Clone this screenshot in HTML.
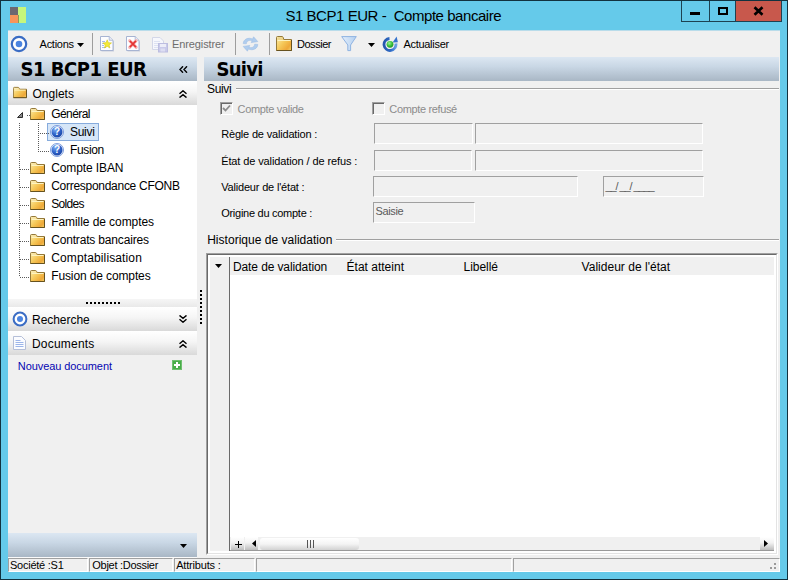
<!DOCTYPE html>
<html><head><meta charset="utf-8"><title>S1 BCP1 EUR - Compte bancaire</title>
<style>
html,body{margin:0;padding:0;}
body{width:788px;height:580px;overflow:hidden;position:relative;background:#65caea;font-family:"Liberation Sans",sans-serif;font-size:12px;color:#000;}
div,span,svg{position:absolute;box-sizing:border-box;}
.t{white-space:pre;}
.hdr{height:24px;top:57px;background:linear-gradient(#dce7f2 0%,#c9d7e5 40%,#a9b7c5 100%);}
.bar{left:8px;width:189px;height:24px;background:linear-gradient(#ffffff 0%,#f5f5f5 45%,#d9d9d9 100%);}
.inp{height:21px;background:#f0f0f0;border:1px solid #fff;border-top-color:#a0a0a0;border-left-color:#a0a0a0;}
.cb{width:13px;height:13px;background:#f0f0f0;border:1px solid #fff;border-top-color:#a0a0a0;border-left-color:#a0a0a0;box-shadow:inset 1px 1px 0 #696969;}
.sep{width:1px;top:33px;height:22px;background:#9d9d9d;}
.sp{height:14px;top:558px;background:#f0f0f0;border:1px solid #fff;border-top-color:#a0a0a0;border-left-color:#a0a0a0;}
.dv{width:1px;background-image:linear-gradient(#5a5a5a 50%,transparent 50%);background-size:1px 2px;}
.dh{height:1px;background-image:linear-gradient(90deg,#5a5a5a 50%,transparent 50%);background-size:2px 1px;}

</style></head><body>
<!-- window frame -->
<div style="left:0;top:0;width:788px;height:580px;background:#65caea;border:1px solid #12323f;"></div>
<!-- app icon -->
<div style="left:10px;top:7px;width:8px;height:8px;background:#6d6870;"></div>
<div style="left:10px;top:15px;width:8px;height:8px;background:#f8955a;"></div>
<div style="left:18px;top:7px;width:8px;height:16px;background:#c6f67c;"></div>
<div style="left:18px;top:15px;width:1px;height:8px;background:#8a9a5a;"></div>
<!-- caption buttons -->
<div style="left:681px;top:1px;width:101px;height:21px;border-left:1px solid #1d4252;border-bottom:1px solid #1d4252;border-right:1px solid #1d4252;"></div>
<div style="left:709px;top:1px;width:1px;height:20px;background:#1d4252;"></div>
<div style="left:735px;top:1px;width:46px;height:20px;background:#c8584c;border-left:1px solid #1d4252;"></div>
<div style="left:690px;top:12px;width:10px;height:3px;background:#000;"></div>
<div style="left:718px;top:7px;width:10px;height:8px;border:2px solid #000;border-top-width:2px;"></div>
<svg style="left:753px;top:6px" width="12" height="10" viewBox="0 0 12 10"><path d="M1.5 1.2 L9.5 8.8 M9.5 1.2 L1.5 8.8" stroke="#000" stroke-width="2.6" fill="none"/></svg>
<!-- client -->
<div style="left:8px;top:30px;width:772px;height:1px;background:#b9dcea;"></div>
<div style="left:8px;top:31px;width:772px;height:541px;background:#f0f0f0;"></div>
<!-- toolbar -->
<svg style="left:10px;top:35px" width="18" height="18" viewBox="0 0 18 18"><circle cx="9" cy="9" r="7.2" fill="#fff" stroke="#3a6cc4" stroke-width="2.2"/><circle cx="9" cy="9" r="3.3" fill="#4b84e0"/></svg>
<svg style="left:77px;top:43px" width="7" height="4" viewBox="0 0 7 4"><path d="M0 0H7L3.5 4Z" fill="#000"/></svg>
<div class="sep" style="left:92px"></div>
<div class="sep" style="left:235px"></div>
<div class="sep" style="left:269px"></div>
<!-- new doc icon -->
<svg style="left:100px;top:36px" width="15" height="16" viewBox="0 0 15 16"><path d="M1.5 1.5H10L14 5.5V15.5H1.5Z" fill="#c9cedb"/><path d="M0.5 0.5H9.2L13 4.3V14.5H0.5Z" fill="#fdfdff" stroke="#a7b4d2"/><path d="M9.2 0.5V4.3H13" fill="#e4e9f5" stroke="#a7b4d2" stroke-width="0.8"/><path d="M2 5.5H5M2 7.5H4M2 9.5H4M2 11.5H6" stroke="#a9bdea"/><path d="M7.2 3.8L8.4 6.7L11.5 6.9L9.1 8.9L9.9 12L7.2 10.3L4.5 12L5.3 8.9L2.9 6.9L6 6.7Z" fill="#f4ea35" stroke="#d4c422" stroke-width="0.6"/></svg>
<!-- delete doc icon -->
<svg style="left:126px;top:36px" width="15" height="16" viewBox="0 0 15 16"><path d="M1.5 1.5H10L14 5.5V15.5H1.5Z" fill="#c9cedb"/><path d="M0.5 0.5H9.2L13 4.3V14.5H0.5Z" fill="#fdfdff" stroke="#a7b4d2"/><path d="M9.2 0.5V4.3H13" fill="#e4e9f5" stroke="#a7b4d2" stroke-width="0.8"/><path d="M3.6 4.6L10.2 11.4M10.2 4.6L3.6 11.4" stroke="#f7b8b8" stroke-width="3" stroke-linecap="round"/><path d="M3.8 4.8L10 11.2M10 4.8L3.8 11.2" stroke="#e43535" stroke-width="1.7"/></svg>
<!-- save (disabled) icon -->
<svg style="left:152px;top:36px" width="17" height="17" viewBox="0 0 17 17"><path d="M0.5 1.5H8L11.5 5V13.5H0.5Z" fill="#f6f7fc" stroke="#d3d7e8"/><path d="M2 5.5H8M2 7.5H9M2 9.5H9M2 11.5H6" stroke="#dde2f2"/><rect x="6.5" y="7.5" width="9" height="8.5" fill="#c9caea" stroke="#bcbde0"/><rect x="8" y="8" width="6" height="3" fill="#ecedf8"/><rect x="8.5" y="12.5" width="4.5" height="3" fill="#dddef2"/></svg>
<!-- refresh arrows -->
<svg style="left:242px;top:36px" width="17" height="16" viewBox="0 0 17 16"><g fill="#b0cdee" stroke="#96b9e2" stroke-width="0.5"><path d="M1.2 7.6C1.4 3.2 6.2 1 10.6 3L11.6 0.8L15.8 5.6L9.2 6.6L10.1 4.7C7.2 3.6 4.6 5 4.3 7.8Z"/><path d="M15.8 8.4C15.6 12.8 10.8 15 6.4 13L5.4 15.2L1.2 10.4L7.8 9.4L6.9 11.3C9.8 12.4 12.4 11 12.7 8.2Z"/></g></svg>
<!-- folder icon (toolbar) -->
<svg style="left:276px;top:36px" width="16" height="15" viewBox="0 0 16 15"><defs><linearGradient id="fg" x1="0" y1="0" x2="1" y2="0.8"><stop offset="0" stop-color="#fcedaa"/><stop offset="0.5" stop-color="#f5c858"/><stop offset="0.85" stop-color="#eea838"/><stop offset="1" stop-color="#f0c25a"/></linearGradient></defs><path d="M0.5 14.5V1.5Q0.5 0.5 1.5 0.5H6Q6.8 0.5 7.2 1.4L7.8 3.5H15.5V14.5Z" fill="url(#fg)" stroke="#94793a"/><path d="M1.5 1.5H6.2L6.9 3.5H1.5Z" fill="#e9d594"/><path d="M1.5 4.5H14.5" stroke="#fdf3c0"/><path d="M0.5 14.5H15.5V4" stroke="#66521f" fill="none"/></svg>
<!-- funnel -->
<svg style="left:341px;top:36px" width="16" height="16" viewBox="0 0 16 16"><defs><linearGradient id="fu" x1="0" y1="0" x2="1" y2="0"><stop offset="0" stop-color="#e3eefb"/><stop offset="1" stop-color="#b4d0f0"/></linearGradient></defs><path d="M0.7 0.6H15.3L9.6 9V14.6H6.8V9Z" fill="url(#fu)" stroke="#8fb3e2" stroke-width="1"/></svg>
<svg style="left:368px;top:43px" width="7" height="4" viewBox="0 0 7 4"><path d="M0 0H7L3.5 4Z" fill="#000"/></svg>
<!-- actualiser icon -->
<svg style="left:382px;top:36px" width="16" height="16" viewBox="0 0 16 16"><defs><radialGradient id="gb" cx="0.4" cy="0.35" r="0.7"><stop offset="0" stop-color="#9af09a"/><stop offset="0.6" stop-color="#35bd35"/><stop offset="1" stop-color="#1f8f2a"/></radialGradient><linearGradient id="rb" x1="0" y1="0" x2="1" y2="0"><stop offset="0" stop-color="#2558ae"/><stop offset="0.6" stop-color="#2f6cc8"/><stop offset="1" stop-color="#6aa0e4"/></linearGradient></defs><path d="M7.5 2.5A6 6 0 1 0 13.9 7.4" fill="none" stroke="url(#rb)" stroke-width="2.8"/><path d="M10.6 6.6L15.9 6.2L14.6 0.6Z" fill="#3572cc"/><circle cx="8" cy="8.3" r="3.4" fill="url(#gb)"/></svg>
<!-- headers -->
<div class="hdr" style="left:8px;width:189px;"></div>
<div class="hdr" style="left:204px;width:575px;"></div>
<svg style="left:179px;top:66px" width="9" height="7" viewBox="0 0 9 7"><path d="M4 0.3L1 3.5L4 6.7M8 0.3L5 3.5L8 6.7" stroke="#000" stroke-width="1.4" fill="none"/></svg>
<!-- Onglets bar -->
<div class="bar" style="top:81px;"></div>
<svg style="left:179px;top:90px" width="8" height="8" viewBox="0 0 8 8"><path d="M0.5 3.8L4 0.8L7.5 3.8M0.5 7.6L4 4.6L7.5 7.6" stroke="#000" stroke-width="1.4" fill="none"/></svg>
<!-- tree -->
<div style="left:8px;top:105px;width:189px;height:194px;background:#fff;"></div>
<div style="left:47px;top:123px;width:52px;height:18px;background:#d6e6f8;border:1px solid #86abdc;"></div>
<svg style="left:17px;top:112px" width="6" height="6" viewBox="0 0 6 6"><path d="M5.5 0.5V5.5H0.5Z" fill="#8a8a8a" stroke="#2e2e2e" stroke-width="1"/></svg>
<div class="dh" style="left:27px;top:115px;width:3px;"></div>
<div class="dv" style="left:19px;top:123px;width:1px;height:154px;"></div>
<div class="dv" style="left:38px;top:123px;width:1px;height:29px;"></div>
<div class="dh" style="left:38px;top:133px;width:12px;"></div>
<div class="dh" style="left:38px;top:151px;width:12px;"></div>
<div class="dh" style="left:20px;top:169px;width:10px;"></div>
<div class="dh" style="left:20px;top:187px;width:10px;"></div>
<div class="dh" style="left:20px;top:205px;width:10px;"></div>
<div class="dh" style="left:20px;top:223px;width:10px;"></div>
<div class="dh" style="left:20px;top:241px;width:10px;"></div>
<div class="dh" style="left:20px;top:259px;width:10px;"></div>
<div class="dh" style="left:20px;top:277px;width:10px;"></div>
<svg style="left:30px;top:108px" width="15" height="12" viewBox="0 0 15 12"><path d="M0.5 11.5V1.5Q0.5 0.5 1.5 0.5H5.5Q6.2 0.5 6.6 1.4L7.2 2.5H14.5V11.5Z" fill="url(#fg)" stroke="#94793a"/><path d="M1.5 1.5H5.6L6.4 2.5H1.5Z" fill="#f6ebc4"/><path d="M1.5 3.5H13.5" stroke="#fdf3c0"/><path d="M0.5 11.5H14.5V3" stroke="#66521f" fill="none"/></svg>
<svg style="left:30px;top:162px" width="15" height="12" viewBox="0 0 15 12"><path d="M0.5 11.5V1.5Q0.5 0.5 1.5 0.5H5.5Q6.2 0.5 6.6 1.4L7.2 2.5H14.5V11.5Z" fill="url(#fg)" stroke="#94793a"/><path d="M1.5 1.5H5.6L6.4 2.5H1.5Z" fill="#f6ebc4"/><path d="M1.5 3.5H13.5" stroke="#fdf3c0"/><path d="M0.5 11.5H14.5V3" stroke="#66521f" fill="none"/></svg>
<svg style="left:30px;top:180px" width="15" height="12" viewBox="0 0 15 12"><path d="M0.5 11.5V1.5Q0.5 0.5 1.5 0.5H5.5Q6.2 0.5 6.6 1.4L7.2 2.5H14.5V11.5Z" fill="url(#fg)" stroke="#94793a"/><path d="M1.5 1.5H5.6L6.4 2.5H1.5Z" fill="#f6ebc4"/><path d="M1.5 3.5H13.5" stroke="#fdf3c0"/><path d="M0.5 11.5H14.5V3" stroke="#66521f" fill="none"/></svg>
<svg style="left:30px;top:198px" width="15" height="12" viewBox="0 0 15 12"><path d="M0.5 11.5V1.5Q0.5 0.5 1.5 0.5H5.5Q6.2 0.5 6.6 1.4L7.2 2.5H14.5V11.5Z" fill="url(#fg)" stroke="#94793a"/><path d="M1.5 1.5H5.6L6.4 2.5H1.5Z" fill="#f6ebc4"/><path d="M1.5 3.5H13.5" stroke="#fdf3c0"/><path d="M0.5 11.5H14.5V3" stroke="#66521f" fill="none"/></svg>
<svg style="left:30px;top:216px" width="15" height="12" viewBox="0 0 15 12"><path d="M0.5 11.5V1.5Q0.5 0.5 1.5 0.5H5.5Q6.2 0.5 6.6 1.4L7.2 2.5H14.5V11.5Z" fill="url(#fg)" stroke="#94793a"/><path d="M1.5 1.5H5.6L6.4 2.5H1.5Z" fill="#f6ebc4"/><path d="M1.5 3.5H13.5" stroke="#fdf3c0"/><path d="M0.5 11.5H14.5V3" stroke="#66521f" fill="none"/></svg>
<svg style="left:30px;top:234px" width="15" height="12" viewBox="0 0 15 12"><path d="M0.5 11.5V1.5Q0.5 0.5 1.5 0.5H5.5Q6.2 0.5 6.6 1.4L7.2 2.5H14.5V11.5Z" fill="url(#fg)" stroke="#94793a"/><path d="M1.5 1.5H5.6L6.4 2.5H1.5Z" fill="#f6ebc4"/><path d="M1.5 3.5H13.5" stroke="#fdf3c0"/><path d="M0.5 11.5H14.5V3" stroke="#66521f" fill="none"/></svg>
<svg style="left:30px;top:252px" width="15" height="12" viewBox="0 0 15 12"><path d="M0.5 11.5V1.5Q0.5 0.5 1.5 0.5H5.5Q6.2 0.5 6.6 1.4L7.2 2.5H14.5V11.5Z" fill="url(#fg)" stroke="#94793a"/><path d="M1.5 1.5H5.6L6.4 2.5H1.5Z" fill="#f6ebc4"/><path d="M1.5 3.5H13.5" stroke="#fdf3c0"/><path d="M0.5 11.5H14.5V3" stroke="#66521f" fill="none"/></svg>
<svg style="left:30px;top:270px" width="15" height="12" viewBox="0 0 15 12"><path d="M0.5 11.5V1.5Q0.5 0.5 1.5 0.5H5.5Q6.2 0.5 6.6 1.4L7.2 2.5H14.5V11.5Z" fill="url(#fg)" stroke="#94793a"/><path d="M1.5 1.5H5.6L6.4 2.5H1.5Z" fill="#f6ebc4"/><path d="M1.5 3.5H13.5" stroke="#fdf3c0"/><path d="M0.5 11.5H14.5V3" stroke="#66521f" fill="none"/></svg>
<svg style="left:13px;top:86px" width="14" height="13" viewBox="0 0 15 12"><path d="M0.5 11.5V1.5Q0.5 0.5 1.5 0.5H5.5Q6.2 0.5 6.6 1.4L7.2 2.5H14.5V11.5Z" fill="url(#fg)" stroke="#94793a"/><path d="M1.5 1.5H5.6L6.4 2.5H1.5Z" fill="#f6ebc4"/><path d="M1.5 3.5H13.5" stroke="#fdf3c0"/><path d="M0.5 11.5H14.5V3" stroke="#66521f" fill="none"/></svg>
<svg style="left:50px;top:125px" width="14" height="14" viewBox="0 0 14 14"><defs><radialGradient id="qg1" cx="0.35" cy="0.25" r="0.85"><stop offset="0" stop-color="#7fb0f5"/><stop offset="0.55" stop-color="#2f63c9"/><stop offset="1" stop-color="#173f9e"/></radialGradient></defs><circle cx="7" cy="7" r="6.5" fill="#f4f8ff" stroke="#5f86d4" stroke-width="0.8"/><circle cx="7" cy="7" r="5.5" fill="url(#qg1)"/><text x="7" y="10.4" text-anchor="middle" font-family="Liberation Sans,sans-serif" font-weight="bold" font-size="10" fill="#fff">?</text></svg>
<svg style="left:50px;top:143px" width="14" height="14" viewBox="0 0 14 14"><defs><radialGradient id="qg2" cx="0.35" cy="0.25" r="0.85"><stop offset="0" stop-color="#7fb0f5"/><stop offset="0.55" stop-color="#2f63c9"/><stop offset="1" stop-color="#173f9e"/></radialGradient></defs><circle cx="7" cy="7" r="6.5" fill="#f4f8ff" stroke="#5f86d4" stroke-width="0.8"/><circle cx="7" cy="7" r="5.5" fill="url(#qg2)"/><text x="7" y="10.4" text-anchor="middle" font-family="Liberation Sans,sans-serif" font-weight="bold" font-size="10" fill="#fff">?</text></svg>
<!-- splitter strip under tree -->
<div style="left:8px;top:299px;width:189px;height:8px;background:linear-gradient(#f6f6f6,#e9e9e9);"></div>
<div style="left:86px;top:302px;width:34px;height:2px;background-image:linear-gradient(90deg,#000 50%,transparent 50%);background-size:4px 2px;"></div>
<div class="bar" style="top:307px;"></div>
<div class="bar" style="top:331px;"></div>
<svg style="left:12px;top:311px" width="16" height="16" viewBox="0 0 16 16"><circle cx="8" cy="8" r="6.4" fill="#fff" stroke="#3a6cc4" stroke-width="2"/><circle cx="8" cy="8" r="3" fill="#4b84e0"/></svg>
<svg style="left:179px;top:315px" width="8" height="8" viewBox="0 0 8 8"><path d="M0.5 0.4L4 3.4L7.5 0.4M0.5 4.2L4 7.2L7.5 4.2" stroke="#000" stroke-width="1.4" fill="none"/></svg>
<svg style="left:179px;top:340px" width="8" height="8" viewBox="0 0 8 8"><path d="M0.5 3.8L4 0.8L7.5 3.8M0.5 7.6L4 4.6L7.5 7.6" stroke="#000" stroke-width="1.4" fill="none"/></svg>
<svg style="left:13px;top:336px" width="13" height="14" viewBox="0 0 13 14"><path d="M0.5 0.5H8.5L12.5 4.5V13.5H0.5Z" fill="#fbfcff" stroke="#b5bfd8"/><path d="M2.5 4.5H7.5M2.5 6.5H10.5M2.5 8.5H10.5M2.5 10.5H10.5" stroke="#9db6ea"/></svg>
<svg style="left:172px;top:360px" width="10" height="10" viewBox="0 0 10 10"><rect x="0.5" y="0.5" width="9" height="9" fill="#48ad48" stroke="#6fbf6f"/><path d="M5 2V8M2 5H8" stroke="#fff" stroke-width="2"/></svg>
<!-- bottom strip of left panel -->
<div style="left:8px;top:533px;width:189px;height:24px;background:linear-gradient(#dce7f2 0%,#c9d7e5 40%,#a9b7c5 100%);"></div>
<svg style="left:180px;top:544px" width="7" height="4" viewBox="0 0 7 4"><path d="M0 0H7L3.5 4Z" fill="#000"/></svg>
<!-- vertical splitter dots -->
<div style="left:200px;top:290px;width:2px;height:34px;background-image:linear-gradient(#000 50%,transparent 50%);background-size:2px 4px;"></div>
<!-- form group lines -->
<div style="left:236px;top:88px;width:543px;height:2px;border-top:1px solid #a0a0a0;border-bottom:1px solid #fff;"></div>
<div style="left:336px;top:239px;width:443px;height:2px;border-top:1px solid #a0a0a0;border-bottom:1px solid #fff;"></div>
<!-- checkboxes -->
<div class="cb" style="left:220px;top:102px;"></div>
<svg style="left:222px;top:104px" width="9" height="9" viewBox="0 0 9 9"><path d="M1 4L3.5 6.5L8 1.5" stroke="#8c8c8c" stroke-width="1.8" fill="none"/></svg>
<div class="cb" style="left:372px;top:102px;"></div>
<!-- inputs -->
<div class="inp" style="left:374px;top:123px;width:99px;"></div>
<div class="inp" style="left:475px;top:123px;width:228px;"></div>
<div class="inp" style="left:374px;top:150px;width:98px;"></div>
<div class="inp" style="left:475px;top:150px;width:228px;"></div>
<div class="inp" style="left:373px;top:176px;width:205px;"></div>
<div class="inp" style="left:603px;top:176px;width:101px;"></div>
<div class="inp" style="left:373px;top:202px;width:102px;"></div>
<!-- grid -->
<div style="left:206px;top:253px;width:572px;height:302px;background:#fff;border:1px solid #fff;border-top-color:#a0a0a0;border-left-color:#a0a0a0;"></div>
<div style="left:207px;top:254px;width:570px;height:300px;background:#fff;border:1px solid #e3e3e3;border-top-color:#696969;border-left-color:#696969;"></div>
<div style="left:210px;top:257px;width:19px;height:294px;background:#f0f0f0;"></div>
<div style="left:229px;top:257px;width:1px;height:294px;background:#6a6a6a;"></div>
<div style="left:230px;top:257px;width:544px;height:18px;background:#f0f0f0;"></div>
<svg style="left:215px;top:264px" width="7" height="4" viewBox="0 0 7 4"><path d="M0 0H7L3.5 4Z" fill="#000"/></svg>
<!-- grid scrollbar -->
<div style="left:230px;top:537px;width:544px;height:14px;background:#f0f0f0;border-bottom:1px solid #9a9a9a;"></div>
<div style="left:231px;top:537px;width:13px;height:13px;background:linear-gradient(#ffffff 0%,#f2f2f2 45%,#bdbdbd 100%);"></div>
<div style="left:235px;top:543.5px;width:7px;height:1.3px;background:#000;"></div>
<div style="left:237.8px;top:540.6px;width:1.3px;height:7px;background:#000;"></div>
<div style="left:245px;top:537px;width:13px;height:13px;background:linear-gradient(#ffffff 0%,#f2f2f2 45%,#bdbdbd 100%);"></div>
<svg style="left:252px;top:540px" width="4" height="7" viewBox="0 0 4 7"><path d="M4 0V7L0 3.5Z" fill="#000"/></svg>
<div style="left:260px;top:538px;width:99px;height:12px;border-radius:3px;background:linear-gradient(#ffffff,#f4f4f4 50%,#d2d2d2);"></div>
<div style="left:307px;top:540px;width:1px;height:8px;background:#555;"></div>
<div style="left:310px;top:540px;width:1px;height:8px;background:#555;"></div>
<div style="left:313px;top:540px;width:1px;height:8px;background:#555;"></div>
<div style="left:760px;top:537px;width:14px;height:13px;background:linear-gradient(#ffffff 0%,#f2f2f2 45%,#bdbdbd 100%);"></div>
<svg style="left:764px;top:540px" width="4" height="7" viewBox="0 0 4 7"><path d="M0 0V7L4 3.5Z" fill="#000"/></svg>
<!-- status bar -->
<div style="left:8px;top:557px;width:189px;height:1px;background:#fafafa;"></div>
<div class="sp" style="left:8px;width:80px;"></div>
<div class="sp" style="left:89px;width:84px;"></div>
<div class="sp" style="left:174px;width:81px;"></div>
<div class="sp" style="left:256px;width:256px;"></div>
<div class="sp" style="left:513px;width:267px;"></div>
<svg style="left:769px;top:562px" width="9" height="9" viewBox="0 0 9 9"><rect x="5" y="1" width="2" height="2" fill="#9a9a9a"/><rect x="1" y="5" width="2" height="2" fill="#9a9a9a"/><rect x="5" y="5" width="2" height="2" fill="#9a9a9a"/></svg>

<!-- text -->
<span class="t" style='left:285.4px;top:8px;font-size:15px;line-height:15px;color:#000;letter-spacing:-0.45px;'>S1 BCP1 EUR -  Compte bancaire</span>
<span class="t" style='left:39.6px;top:39px;font-size:11px;line-height:11px;color:#000;letter-spacing:-0.28px;'>Actions</span>
<span class="t" style='left:172.0px;top:39px;font-size:11px;line-height:11px;color:#6d6d6d;letter-spacing:-0.11px;'>Enregistrer</span>
<span class="t" style='left:297.0px;top:39px;font-size:11px;line-height:11px;color:#000;letter-spacing:-0.47px;'>Dossier</span>
<span class="t" style='left:403.4px;top:39px;font-size:11px;line-height:11px;color:#000;letter-spacing:-0.28px;'>Actualiser</span>
<span class="t" style='left:20.6px;top:61px;font-size:18px;line-height:18px;color:#000;letter-spacing:-0.51px;font-weight:bold;font-family:"DejaVu Sans",sans-serif;transform:scaleY(1.07);transform-origin:0 15px;'>S1 BCP1 EUR</span>
<span class="t" style='left:216.4px;top:61px;font-size:18px;line-height:18px;color:#000;letter-spacing:-0.71px;font-weight:bold;font-family:"DejaVu Sans",sans-serif;transform:scaleY(1.07);transform-origin:0 15px;'>Suivi</span>
<span class="t" style='left:32.4px;top:88px;font-size:12px;line-height:12px;color:#000;letter-spacing:0.04px;'>Onglets</span>
<span class="t" style='left:51.2px;top:108px;font-size:12px;line-height:12px;color:#000;letter-spacing:-0.58px;'>Général</span>
<span class="t" style='left:70.0px;top:126px;font-size:12px;line-height:12px;color:#000;letter-spacing:-0.3px;'>Suivi</span>
<span class="t" style='left:70.0px;top:144px;font-size:12px;line-height:12px;color:#000;letter-spacing:-0.35px;'>Fusion</span>
<span class="t" style='left:51.2px;top:162px;font-size:12px;line-height:12px;color:#000;letter-spacing:-0.11px;'>Compte IBAN</span>
<span class="t" style='left:51.2px;top:180px;font-size:12px;line-height:12px;color:#000;letter-spacing:-0.28px;'>Correspondance CFONB</span>
<span class="t" style='left:51.2px;top:198px;font-size:12px;line-height:12px;color:#000;letter-spacing:-0.66px;'>Soldes</span>
<span class="t" style='left:51.2px;top:216px;font-size:12px;line-height:12px;color:#000;letter-spacing:-0.07px;'>Famille de comptes</span>
<span class="t" style='left:51.2px;top:234px;font-size:12px;line-height:12px;color:#000;letter-spacing:-0.17px;'>Contrats bancaires</span>
<span class="t" style='left:51.2px;top:252px;font-size:12px;line-height:12px;color:#000;letter-spacing:0.13px;'>Comptabilisation</span>
<span class="t" style='left:51.2px;top:270px;font-size:12px;line-height:12px;color:#000;letter-spacing:-0.12px;'>Fusion de comptes</span>
<span class="t" style='left:32.0px;top:314px;font-size:12px;line-height:12px;color:#000;letter-spacing:-0.04px;'>Recherche</span>
<span class="t" style='left:32.0px;top:338px;font-size:12px;line-height:12px;color:#000;letter-spacing:0.2px;'>Documents</span>
<span class="t" style='left:17.8px;top:361px;font-size:11px;line-height:11px;color:#0606b2;letter-spacing:-0.08px;'>Nouveau document</span>
<span class="t" style='left:207.0px;top:83px;font-size:12px;line-height:12px;color:#000;letter-spacing:-0.33px;'>Suivi</span>
<span class="t" style='left:237.6px;top:104px;font-size:11px;line-height:11px;color:#8c8c8c;letter-spacing:-0.33px;'>Compte valide</span>
<span class="t" style='left:389.3px;top:104px;font-size:11px;line-height:11px;color:#8c8c8c;letter-spacing:-0.35px;'>Compte refusé</span>
<span class="t" style='left:221.2px;top:129px;font-size:11px;line-height:11px;color:#000;letter-spacing:-0.18px;'>Règle de validation :</span>
<span class="t" style='left:221.2px;top:156px;font-size:11px;line-height:11px;color:#000;letter-spacing:-0.11px;'>État de validation / de refus :</span>
<span class="t" style='left:221.2px;top:182px;font-size:11px;line-height:11px;color:#000;letter-spacing:-0.18px;'>Valideur de l'état :</span>
<span class="t" style='left:221.2px;top:208px;font-size:11px;line-height:11px;color:#000;letter-spacing:-0.27px;'>Origine du compte :</span>
<span class="t" style='left:375.4px;top:206px;font-size:11px;line-height:11px;color:#5a5a5a;letter-spacing:-0.33px;'>Saisie</span>
<span class="t" style='left:605.5px;top:181px;font-size:11px;line-height:11px;color:#5a5a5a;'><span style='position:static;letter-spacing:-1.12px'>__</span><span style='position:static;letter-spacing:0.94px'>/</span><span style='position:static;letter-spacing:-1.12px'>__</span><span style='position:static;letter-spacing:0.94px'>/</span><span style='position:static;letter-spacing:-1.12px'>____</span></span>
<span class="t" style='left:207.2px;top:234px;font-size:12px;line-height:12px;color:#000;letter-spacing:0.02px;'>Historique de validation</span>
<span class="t" style='left:233.0px;top:261px;font-size:12px;line-height:12px;color:#000;letter-spacing:-0.11px;'>Date de validation</span>
<span class="t" style='left:346.6px;top:261px;font-size:12px;line-height:12px;color:#000;letter-spacing:0.0px;'>État atteint</span>
<span class="t" style='left:463.6px;top:261px;font-size:12px;line-height:12px;color:#000;letter-spacing:-0.05px;'>Libellé</span>
<span class="t" style='left:581.6px;top:261px;font-size:12px;line-height:12px;color:#000;letter-spacing:0.02px;'>Valideur de l'état</span>
<span class="t" style='left:10.0px;top:560px;font-size:11px;line-height:11px;color:#000;letter-spacing:-0.25px;'>Société :S1</span>
<span class="t" style='left:92.3px;top:560px;font-size:11px;line-height:11px;color:#000;letter-spacing:-0.28px;'>Objet :Dossier</span>
<span class="t" style='left:176.2px;top:560px;font-size:11px;line-height:11px;color:#000;letter-spacing:-0.19px;'>Attributs :</span>
</body></html>
